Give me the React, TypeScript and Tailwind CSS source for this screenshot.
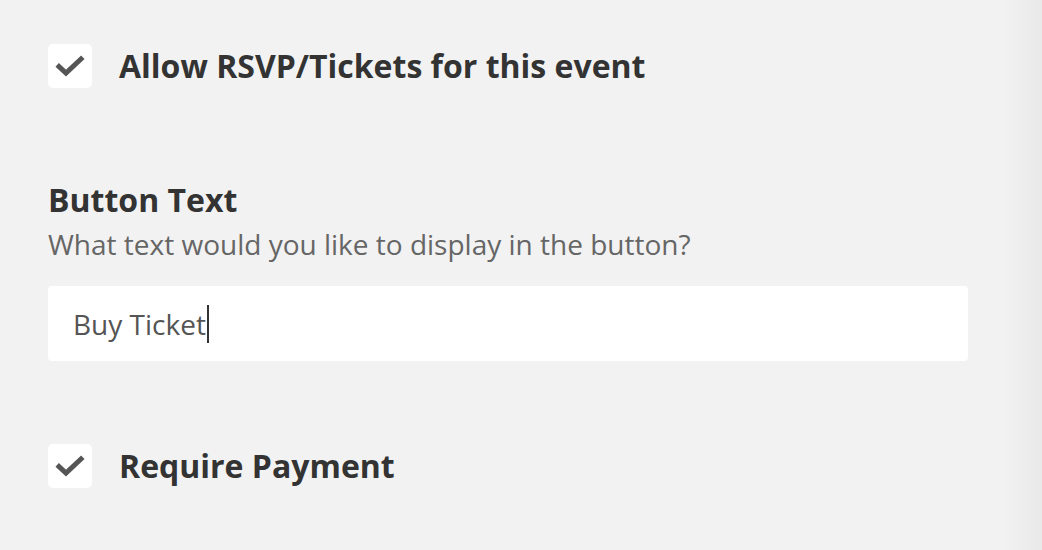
function CheckRow({ label }: { label: string }) {
  return (
    <div className="flex items-center gap-[27px]">
      <div className="w-[44px] h-[44px] rounded-[5px] bg-white flex items-center justify-center">
        <svg width="30" height="22" viewBox="0 0 30 22" fill="none">
          <path d="M4 11.5 L11 18 L26 4" stroke="#555" strokeWidth="5" strokeLinecap="square" strokeLinejoin="miter" />
        </svg>
      </div>
      <span className="text-[32px] font-bold text-[#333] leading-none">{label}</span>
    </div>
  )
}

export default function App() {
  return (
    <div className="relative w-[1042px] h-[550px] bg-[#f2f2f2] overflow-hidden font-['Open_Sans',sans-serif]">
      {/* scroll shadow on the right */}
      <div className="absolute top-0 right-0 h-full w-[40px] bg-gradient-to-r from-[#f2f2f2] to-[#e9e9e9]" />

      <div className="relative px-[48px] pt-[44px]">
        <CheckRow label="Allow RSVP/Tickets for this event" />

        <div className="mt-[93px]">
          <div className="text-[32px] font-bold text-[#333] leading-[38px]">Button Text</div>
          <div className="mt-[9px] text-[28px] text-[#666] leading-[32px]">What text would you like to display in the button?</div>
          <div className="mt-[26px] w-[920px] h-[75px] bg-white rounded-[4px] flex items-center px-[25px]">
            <span className="text-[28px] leading-[28px] text-[#555]">Buy Ticket</span>
            <span className="w-[2px] h-[38px] bg-[#333] ml-[1px]" />
          </div>
        </div>

        <div className="mt-[83px]">
          <CheckRow label="Require Payment" />
        </div>
      </div>
    </div>
  )
}
